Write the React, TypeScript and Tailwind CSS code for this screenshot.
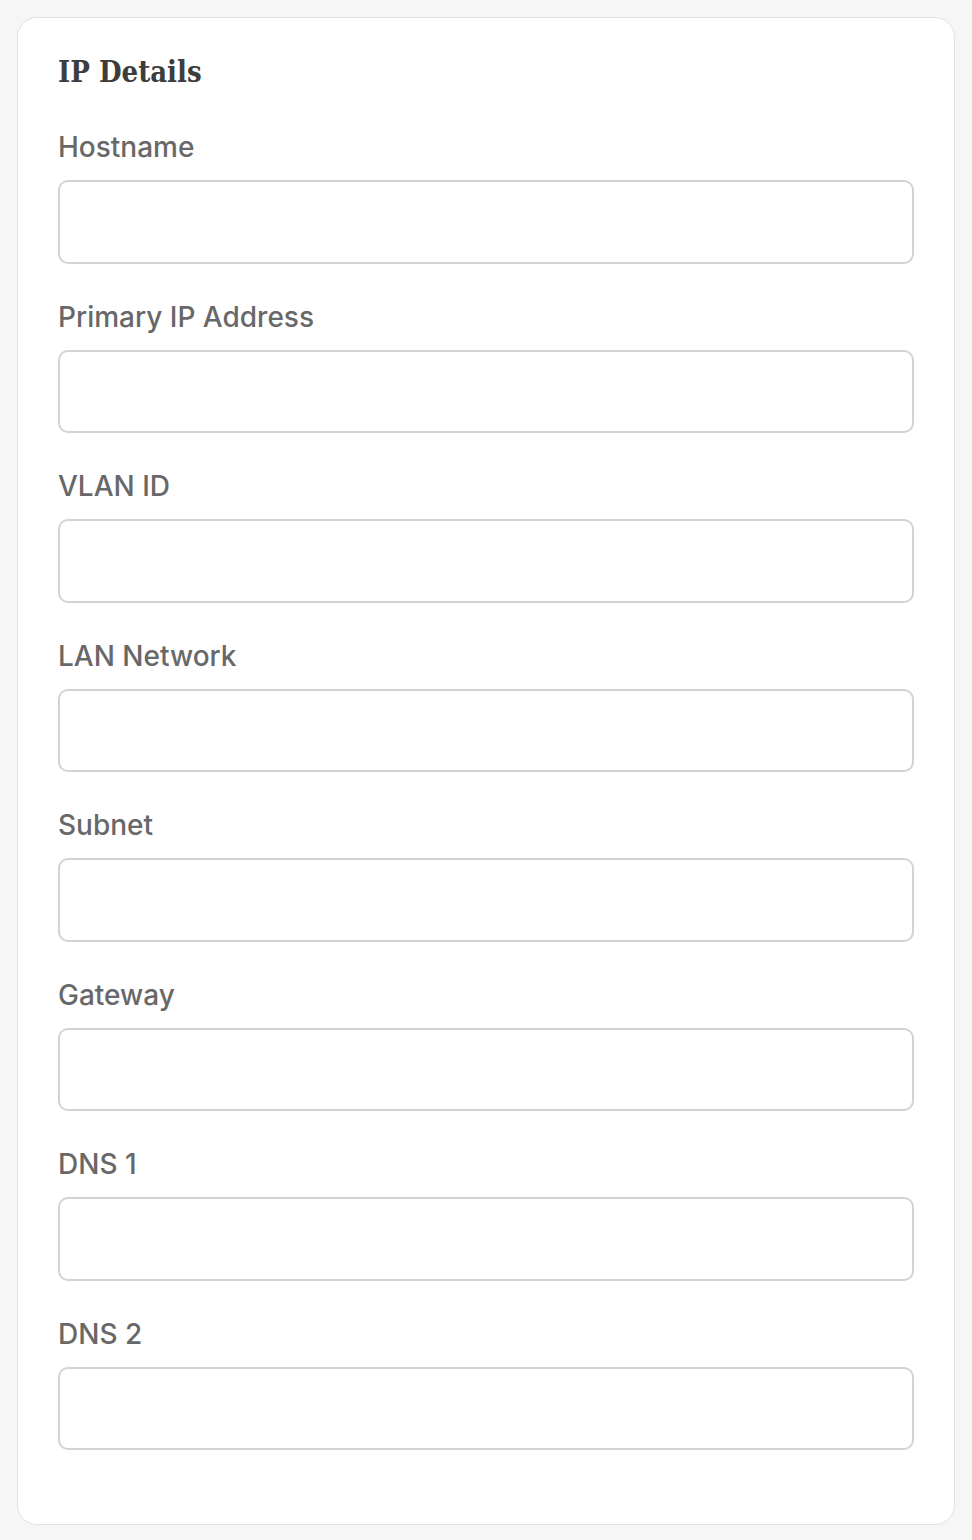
import React from 'react';

const fields = [
  'Hostname',
  'Primary IP Address',
  'VLAN ID',
  'LAN Network',
  'Subnet',
  'Gateway',
  'DNS 1',
  'DNS 2',
];

export default function App() {
  return (
    <div className="min-h-[1540px] bg-[#f6f6f6] p-[17px]" style={{ fontFamily: 'Inter, "Noto Sans", sans-serif' }}>
      <div className="rounded-[20px] border border-[#e2e2e2] bg-white px-[40px] pt-[40px] pb-[74px]">
        <h2
          className="mb-[45px] text-[29px] leading-[28px] font-bold font-stretch-condensed text-[#3d3d3d]"
          style={{ fontFamily: '"DejaVu Serif Condensed", "DejaVu Serif", serif' }}
        >
          IP Details
        </h2>
        <div className="flex flex-col gap-[37px]">
          {fields.map((f) => (
            <div key={f} className="flex flex-col">
              <label className="mb-[17px] text-[28px] leading-[32px] font-medium text-[#686868]">{f}</label>
              <input
                type="text"
                className="h-[83.5px] w-full rounded-[10px] border-2 border-[#d3d3d3] bg-white px-4 text-[20px] outline-none"
              />
            </div>
          ))}
        </div>
      </div>
    </div>
  );
}
